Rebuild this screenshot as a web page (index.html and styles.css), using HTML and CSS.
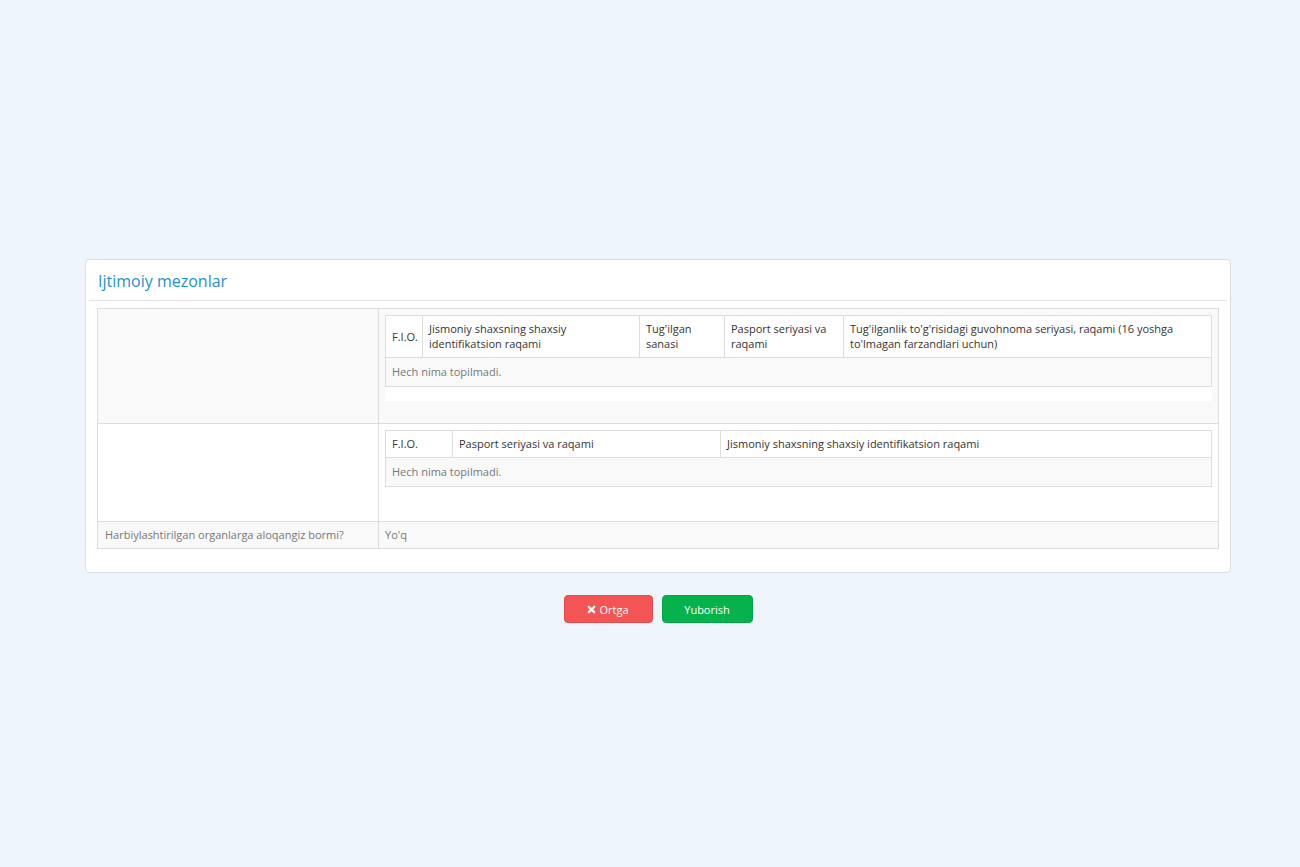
FILE: index.html
```html
<!DOCTYPE html>
<html lang="uz">
<head>
<meta charset="utf-8">
<title>Ijtimoiy mezonlar</title>
<link rel="stylesheet" href="styles.css">
</head>
<body>
<div class="page">
  <div class="panel">
    <div class="panel-heading">
      <h3 class="panel-title">Ijtimoiy mezonlar</h3>
    </div>
    <div class="panel-body">
      <table class="detail">
        <tbody>
          <tr class="odd">
            <th class="label"></th>
            <td class="value">
              <div class="grid">
                <table class="inner">
                  <thead>
                    <tr class="two-line">
                      <th class="c-fio">F.I.O.</th>
                      <th class="c-jsh">Jismoniy shaxsning shaxsiy identifikatsion raqami</th>
                      <th class="c-tug">Tug'ilgan sanasi</th>
                      <th class="c-pas">Pasport seriyasi va raqami</th>
                      <th>Tug'ilganlik to'g'risidagi guvohnoma seriyasi, raqami (16 yoshga to'lmagan farzandlari uchun)</th>
                    </tr>
                  </thead>
                  <tbody>
                    <tr><td colspan="5" class="empty">Hech nima topilmadi.</td></tr>
                  </tbody>
                </table>
              </div>
            </td>
          </tr>
          <tr class="even">
            <th class="label"></th>
            <td class="value">
              <div class="grid short">
                <table class="inner">
                  <thead>
                    <tr>
                      <th class="c-fio2">F.I.O.</th>
                      <th class="c-pas2">Pasport seriyasi va raqami</th>
                      <th>Jismoniy shaxsning shaxsiy identifikatsion raqami</th>
                    </tr>
                  </thead>
                  <tbody>
                    <tr><td colspan="3" class="empty">Hech nima topilmadi.</td></tr>
                  </tbody>
                </table>
              </div>
            </td>
          </tr>
          <tr class="odd">
            <th class="label">Harbiylashtirilgan organlarga aloqangiz bormi?</th>
            <td class="value plain">Yo'q</td>
          </tr>
        </tbody>
      </table>
    </div>
  </div>
  <div class="actions">
    <button class="btn btn-danger" type="button"><svg class="ico" viewBox="0 0 10 10" width="9" height="9"><path d="M2 2 L8 8 M8 2 L2 8" stroke="#fff" stroke-width="2.6" stroke-linecap="round"/></svg>Ortga</button>
    <button class="btn btn-success" type="button">Yuborish</button>
  </div>
</div>
</body>
</html>
```

FILE: styles.css
```css
* { box-sizing: border-box; }
html, body { margin: 0; padding: 0; }
body {
  background: #eef5fc;
  font-family: "Open Sans", "Liberation Sans", sans-serif;
  font-size: 11px;
  color: #555;
  width: 1300px;
  height: 867px;
}
.page {
  padding: 259px 70px 0 85px;
}
.panel {
  width: 1146px;
  background: #fff;
  border: 1px solid #dadde0;
  border-radius: 4px;
  padding: 0 3px 23px 3px;
}
.panel-heading {
  height: 41px;
  border-bottom: 1px solid #e3e5e8;
  display: flex;
  align-items: center;
  padding: 0 9px 0 9px;
}
.panel-title {
  margin: 2px 0 0 0;
  font-size: 16px;
  font-weight: 400;
  color: #1f8fd0;
}
.panel-body {
  padding: 7px 8px 0 8px;
}
table { border-collapse: collapse; border-spacing: 0; }
.detail {
  width: 100%;
  border: 1px solid #dddddd;
}
.detail > tbody > tr > th,
.detail > tbody > tr > td {
  border: 1px solid #dddddd;
  vertical-align: top;
  text-align: left;
}
.detail tr.odd > th, .detail tr.odd > td { background: #f9f9f9; }
.detail tr.even > th, .detail tr.even > td { background: #fff; }
.label {
  width: 281px;
  font-weight: 400;
  color: #777;
  padding: 6px 7px;
  line-height: 14px;
}
.value {
  padding: 6px 6px 7px 6px;
}
.value.plain {
  color: #777;
  padding: 6px 6px;
  line-height: 14px;
}
.grid {
  background: #fff;
  padding-bottom: 14px;
  margin-bottom: 15px;
}
.grid.short { margin-bottom: 13px; }
.inner {
  width: 100%;
  border: 1px solid #dddddd;
}
.inner th, .inner td {
  border: 1px solid #dddddd;
  text-align: left;
  vertical-align: top;
  padding: 5px 6px 5px 6px;
  line-height: 16px;
}
.inner tr.two-line th { line-height: 15px; padding-bottom: 6px; }
.inner th {
  font-weight: 400;
  color: #333;
  background: #fff;
}
.inner tr.two-line th.c-fio { width: 36px; vertical-align: middle; padding: 5px 4px 5px 6px; }
.inner th.c-jsh { width: 217px; }
.inner th.c-tug { width: 85px; }
.inner th.c-pas { width: 119px; }
.inner th.c-fio2 { width: 67px; }
.inner th.c-pas2 { width: 268px; }
.inner td.empty {
  background: #f9f9f9;
  color: #777;
  padding: 6px 6px 6px 6px;
}
.actions {
  width: 1146px;
  display: flex;
  justify-content: center;
  gap: 9px;
  padding-top: 22px;
}
.btn {
  height: 28px;
  border: none;
  border-radius: 4px;
  color: #fff;
  font-family: "Open Sans", "Liberation Sans", sans-serif;
  font-size: 11px;
  font-weight: 500;
  display: inline-flex;
  align-items: center;
  justify-content: center;
  gap: 3px;
  padding: 0;
}
.btn-danger { width: 89px; background: #f35454; border: 1px solid #e84848; }
.btn-success { width: 91px; background: #06b24c; border: 1px solid #05a545; }
.ico { display: block; }
```
